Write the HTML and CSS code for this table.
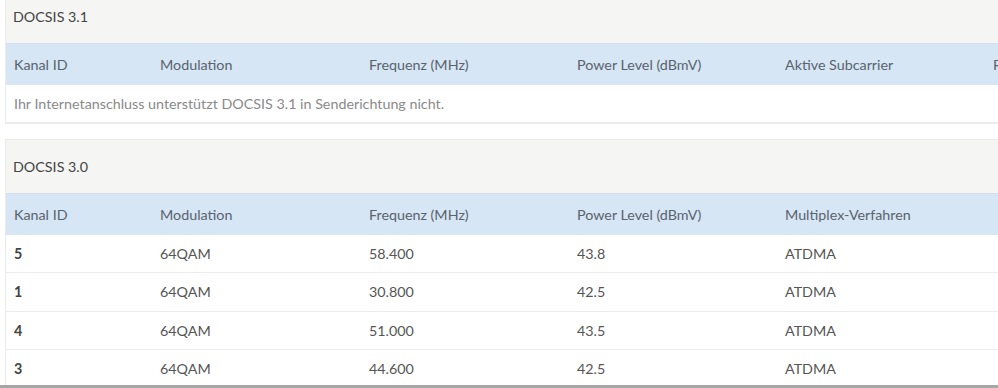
FILE: index.html
```html
<!DOCTYPE html>
<html lang="de">
<head>
<meta charset="utf-8">
<title>DOCSIS</title>
<link rel="stylesheet" href="styles.css">
</head>
<body>
<div class="page">
  <section class="card card-first">
    <div class="card-title">DOCSIS 3.1</div>
    <table class="grid">
      <colgroup>
        <col class="c1"><col class="c2"><col class="c3"><col class="c4"><col class="c5"><col class="c6">
      </colgroup>
      <thead>
        <tr><th>Kanal ID</th><th>Modulation</th><th>Frequenz (MHz)</th><th>Power Level (dBmV)</th><th>Aktive Subcarrier</th><th>FFT</th></tr>
      </thead>
      <tbody>
        <tr><td class="msg" colspan="6">Ihr Internetanschluss unterstützt DOCSIS 3.1 in Senderichtung nicht.</td></tr>
      </tbody>
    </table>
  </section>
  <section class="card">
    <div class="card-title">DOCSIS 3.0</div>
    <table class="grid">
      <colgroup>
        <col class="c1"><col class="c2"><col class="c3"><col class="c4"><col class="c5"><col class="c6">
      </colgroup>
      <thead>
        <tr><th>Kanal ID</th><th>Modulation</th><th>Frequenz (MHz)</th><th>Power Level (dBmV)</th><th>Multiplex-Verfahren</th><th></th></tr>
      </thead>
      <tbody>
        <tr><td class="id">5</td><td>64QAM</td><td>58.400</td><td>43.8</td><td>ATDMA</td><td></td></tr>
        <tr><td class="id">1</td><td>64QAM</td><td>30.800</td><td>42.5</td><td>ATDMA</td><td></td></tr>
        <tr><td class="id">4</td><td>64QAM</td><td>51.000</td><td>43.5</td><td>ATDMA</td><td></td></tr>
        <tr><td class="id">3</td><td>64QAM</td><td>44.600</td><td>42.5</td><td>ATDMA</td><td></td></tr>
      </tbody>
    </table>
  </section>
</div>
<div class="frame-edge"></div>
</body>
</html>
```
FILE: styles.css
```css
html, body {
  margin: 0;
  padding: 0;
  overflow: hidden;
  background: #ffffff;
}
body {
  font-family: "Source Sans Pro", Lato, "Liberation Sans", sans-serif;
  font-size: 14.3px;
  color: #555555;
}
.page {
  padding-left: 5px;
  width: 1200px;
}
.card {
  border: 1px solid #ebebeb;
  border-right: none;
  background: #ffffff;
  margin-bottom: 15px;
}
.card-first {
  margin-top: -11px;
}
.card-title {
  height: 53px;
  line-height: 53px;
  padding-left: 7px;
  background: #f5f5f3;
  color: #444444;
}
.grid {
  border-collapse: collapse;
  table-layout: fixed;
  width: 100%;
}
.c1 { width: 146px; }
.c2 { width: 209px; }
.c3 { width: 208px; }
.c4 { width: 208px; }
.c5 { width: 208px; }
.grid th {
  background: #d6e6f4;
  color: #59636e;
  font-weight: normal;
  text-align: left;
  height: 41px;
  padding: 0 0 0 8px;
  border-top: 1px solid #cfe0ef;
  white-space: nowrap;
  overflow: hidden;
}
.grid td {
  height: 37.5px;
  padding: 0 0 0 8px;
  border-bottom: 1px solid #ececec;
  color: #555555;
  white-space: nowrap;
}
.grid td.id {
  font-weight: bold;
  color: #444444;
}
.grid td.msg {
  height: 36.5px;
  color: #8a8a8a;
}
.frame-edge {
  position: fixed;
  left: 0;
  right: 0;
  bottom: 0;
  height: 3px;
  background: #a6a6a6;
}
```
